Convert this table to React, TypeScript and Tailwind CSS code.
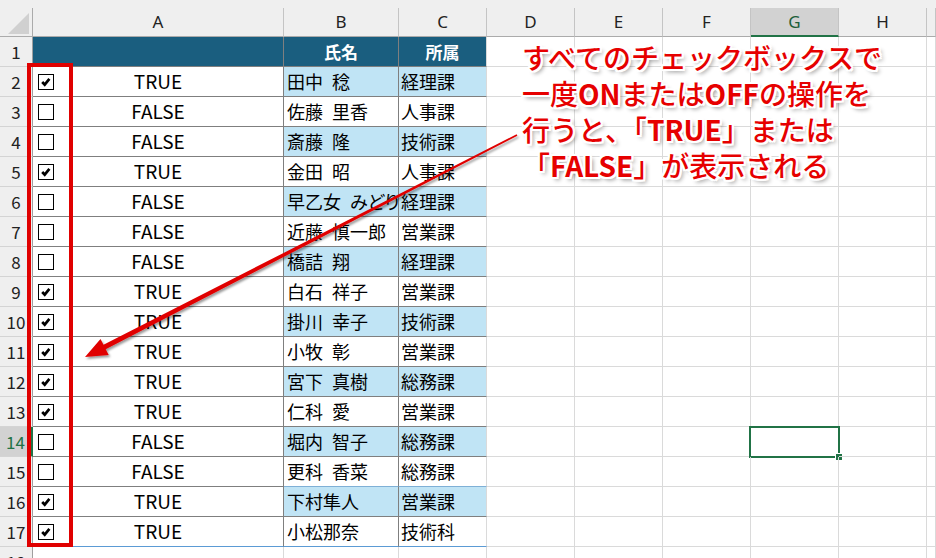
import * as React from "react";

type Row = { on: boolean; name: string; dept: string };

const ROWS: Row[] = [
  { on: true, name: "田中\u2002稔", dept: "経理課" },
  { on: false, name: "佐藤\u2002里香", dept: "人事課" },
  { on: false, name: "斎藤\u2002隆", dept: "技術課" },
  { on: true, name: "金田\u2002昭", dept: "人事課" },
  { on: false, name: "早乙女\u2002みどり", dept: "経理課" },
  { on: false, name: "近藤\u2002慎一郎", dept: "営業課" },
  { on: false, name: "橋詰\u2002翔", dept: "経理課" },
  { on: true, name: "白石\u2002祥子", dept: "営業課" },
  { on: true, name: "掛川\u2002幸子", dept: "技術課" },
  { on: true, name: "小牧\u2002彰", dept: "営業課" },
  { on: true, name: "宮下\u2002真樹", dept: "総務課" },
  { on: true, name: "仁科\u2002愛", dept: "営業課" },
  { on: false, name: "堀内\u2002智子", dept: "総務課" },
  { on: false, name: "更科\u2002香菜", dept: "総務課" },
  { on: true, name: "下村隼人", dept: "営業課" },
  { on: true, name: "小松那奈", dept: "技術科" },
];

const GRID = "grid grid-cols-[33px_251px_115px_88px_88px_88px_88px_88px_88px_1fr]";
const LETTERS = ["A", "B", "C", "D", "E", "F", "G", "H", ""];
const OUTLINE =
  "[text-shadow:0_0_2px_#fff,2px_0_0_#fff,-2px_0_0_#fff,0_2px_0_#fff,0_-2px_0_#fff,2px_2px_0_#fff,-2px_-2px_0_#fff,2px_-2px_0_#fff,-2px_2px_0_#fff,3px_3px_4px_rgba(0,0,0,0.45)]";

function Checkbox({ on }: { on: boolean }) {
  return (
    <div className="ml-[5px] flex h-4 w-4 shrink-0 items-center justify-center border border-black bg-white">
      {on && (
        <svg viewBox="0 0 14 14" className="h-[14px] w-[14px]">
          <path d="M3.2 7 L5.7 9.6 L10.4 3.8" fill="none" stroke="#000" strokeWidth="2.7" />
        </svg>
      )}
    </div>
  );
}

function RowHead({ n, active }: { n: number; active?: boolean }) {
  return (
    <div
      className={
        active
          ? "flex items-center justify-center border-b border-r-2 border-b-[#d4d4d4] border-r-[#217346] bg-[#d2d2d2] text-[17px] text-[#217346]"
          : "flex items-center justify-center border-b border-r border-b-[#d4d4d4] border-r-[#9f9f9f] bg-[#efefef] text-[17px] text-[#222]"
      }
    >
      {n}
    </div>
  );
}

function EmptyCells({ selected }: { selected?: boolean }) {
  return (
    <>
      {[0, 1, 2, 3, 4, 5].map((i) => (
        <div key={i} className="relative border-b border-r border-[#dadada]">
          {selected && i === 3 && (
            <div className="absolute -left-[2px] -top-px h-[32px] w-[91px] border-2 border-[#217346]">
              <div className="absolute -bottom-[5px] -right-[5px] h-[8px] w-[8px] border border-white bg-[#217346]" />
            </div>
          )}
        </div>
      ))}
    </>
  );
}

export default function App() {
  return (
    <div className="relative h-[558px] w-[936px] overflow-hidden bg-white font-['Noto_Sans_CJK_JP',sans-serif] text-black">
      <div className="h-[8px] bg-[#efefef]" />

      {/* column headers */}
      <div className={`${GRID} h-[29px] bg-[#efefef] font-['Noto_Sans',sans-serif] text-[17px] text-[#222]`}>
        <div className="flex items-end justify-end border-b border-r border-[#ababab] pb-[2px] pr-[3px]">
          <svg width="21" height="21" viewBox="0 0 21 21">
            <polygon points="0,21 21,21 21,0" fill="#d0d0d0" />
          </svg>
        </div>
        {LETTERS.map((l) =>
          l === "G" ? (
            <div key={l} className="flex items-center justify-center border-b-2 border-r border-b-[#217346] border-r-[#c4c4c4] bg-[#d2d2d2] text-[#1d5e3a]">
              {l}
            </div>
          ) : (
            <div key={l || "i"} className="flex items-center justify-center border-b border-r border-b-[#ababab] border-r-[#c4c4c4]">
              {l}
            </div>
          )
        )}
      </div>

      {/* row 1: table header */}
      <div className={`${GRID} h-[30px]`}>
        <RowHead n={1} />
        <div className="border-b border-r border-[#7f7f7f] bg-[#1a5e7f]" />
        <div className="flex items-center justify-center border-b border-r border-[#7f7f7f] bg-[#1a5e7f] text-[17px] font-bold text-white">氏名</div>
        <div className="flex items-center justify-center border-b border-r border-b-[#7f7f7f] border-r-[#dadada] bg-[#1a5e7f] text-[17px] font-bold text-white">所属</div>
        <EmptyCells />
      </div>

      {ROWS.map((r, i) => {
        const n = i + 2;
        const tint = n % 2 === 0 ? "bg-[#c0e4f5]" : "bg-white";
        const last = n === 17;
        const bottom = last ? "border-b-[#5b9bd5]" : n === 15 ? "border-b-[#7fb0d6]" : "border-b-[#7f7f7f]";
        return (
          <div key={n} className={`${GRID} h-[30px] text-[18px]`}>
            <RowHead n={n} active={n === 14} />
            <div className={`flex items-center border-b border-r border-r-[#7f7f7f] ${last ? "border-b-[#5b9bd5]" : "border-b-[#7f7f7f]"}`}>
              <Checkbox on={r.on} />
              <span className="mr-[21px] flex-1 text-center text-[19px]">{r.on ? "TRUE" : "FALSE"}</span>
            </div>
            <div className={`flex items-center overflow-hidden whitespace-nowrap border-b border-r border-r-[#7f7f7f] pl-[3px] [font-feature-settings:'palt'] ${bottom} ${tint}`}>
              {r.name}
            </div>
            <div className={`flex items-center overflow-hidden whitespace-nowrap border-b border-r border-r-[#dadada] pl-[2px] ${bottom} ${tint}`}>
              {r.dept}
            </div>
            <EmptyCells selected={n === 14} />
          </div>
        );
      })}

      <div className={`${GRID} h-[30px]`}>
        <RowHead n={18} />
        <div className="border-r border-[#dadada]" />
        <div className="border-r border-[#dadada]" />
        <div className="border-r border-[#dadada]" />
        <EmptyCells />
      </div>

      {/* red frame around the checkboxes */}
      <div className="pointer-events-none absolute left-[27px] top-[63px] h-[484px] w-[46px] border-4 border-[#e00000]" />

      {/* arrow */}
      <svg className="pointer-events-none absolute left-0 top-0" width="936" height="558" viewBox="0 0 936 558">
        <defs>
          <filter id="sh" x="-10%" y="-10%" width="120%" height="120%">
            <feDropShadow dx="1.5" dy="2" stdDeviation="1.2" floodColor="#000" floodOpacity="0.4" />
          </filter>
        </defs>
        <polygon
          points="516.6,134.3 517.4,135.8 105.7,349.2 108.7,354.9 85,357 100.5,338.9 103.5,344.7"
          fill="#e00000"
          filter="url(#sh)"
        />
      </svg>

      {/* callout text */}
      <div className={`pointer-events-none absolute left-[522px] top-[39px] whitespace-nowrap text-[28px] leading-[36px] font-medium text-[#e60000] ${OUTLINE}`}>
        <div>すべてのチェックボックスで</div>
        <div>
          一度<span className="font-bold">ON</span>または<span className="font-bold">OFF</span>の操作を
        </div>
        <div>
          行うと、「<span className="font-bold">TRUE</span>」または
        </div>
        <div>
          「<span className="font-bold">FALSE</span>」が表示される
        </div>
      </div>
    </div>
  );
}
